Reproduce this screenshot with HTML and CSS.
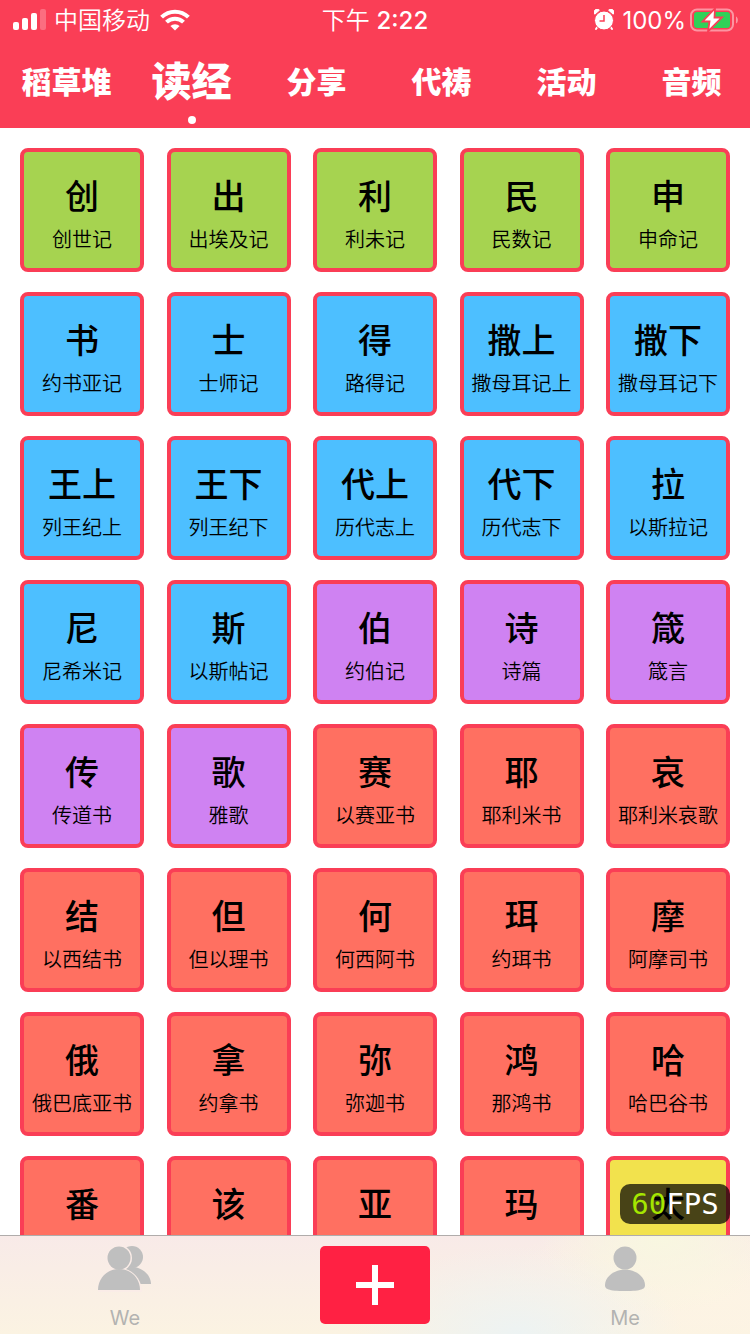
FILE: index.html
```html
<!DOCTYPE html>
<html lang="zh-CN">
<head>
<meta charset="utf-8">
<meta name="viewport" content="width=device-width, initial-scale=1">
<title>读经</title>
<link rel="stylesheet" href="styles.css">
</head>
<body>
<header class="header">
  <div class="status">
    <div class="status-side">
      <svg class="signal" width="34" height="22" viewBox="0 0 34 22" fill="#fff"><rect x="1" y="13" width="6" height="8" rx="2"/><rect x="10" y="9" width="6" height="12" rx="2"/><rect x="19" y="4" width="6" height="17" rx="2"/><rect x="28" y="0" width="6" height="21" rx="2" opacity=".25"/></svg>
      <span class="carrier">中国移动</span>
      <svg class="wifi" width="30" height="22" viewBox="0 0 30 22" fill="none" stroke="#fff" stroke-width="4"><path d="M1.6 8.2a19 19 0 0 1 26.8 0"/><path d="M6.5 13.2a12 12 0 0 1 17 0"/><path d="M15 21.5l-4.6-4.4a6.5 6.5 0 0 1 9.2 0z" fill="#fff" stroke="none"/></svg>
    </div>
    <div class="clock">下午 <time>2:22</time></div>
    <div class="status-side status-end">
      <svg class="alarm" width="20" height="22" viewBox="0 0 20 22"><path d="M4 17l-2 3M16 17l2 3" stroke="#fff" stroke-width="2" stroke-linecap="round"/><path d="M.8 5.2A3 3 0 0 1 5.4 1.200zM19.2 5.200A3 3 0 0 0 14.600 1.200z" fill="#fff" stroke="#fff" stroke-linejoin="round"/><circle cx="10" cy="11.500" r="9.500" fill="#fff" stroke="#fa3e56"/><path d="M10 6v6H5.500" fill="none" stroke="#fa3e56" stroke-width="1.500"/></svg>
      <span class="percent">100%</span>
      <svg class="battery" width="48" height="24" viewBox="0 0 48 24"><rect x="1" y="1.500" width="42" height="21" rx="6" fill="none" stroke="#fff" stroke-opacity=".45" stroke-width="2"/><path d="M46 8.500c2.500 1 2.500 6 0 7z" fill="#fff" fill-opacity=".45"/><rect x="4" y="4" width="36" height="16" rx="3" fill="#30d158"/><path d="M25 .5L12.500 13.500h7L18 23.500 32 9.500h-7.500z" fill="#fff" stroke="#fa3e56" stroke-width="1.800"/></svg>
    </div>
  </div>
  <nav class="tabs">
    <button class="tab">稻草堆</button>
    <button class="tab tab-active" aria-current="page">读经</button>
    <button class="tab">分享</button>
    <button class="tab">代祷</button>
    <button class="tab">活动</button>
    <button class="tab">音频</button>
  </nav>
</header>
<main class="books">
  <button class="book law"><b>创</b><span>创世记</span></button>
  <button class="book law"><b>出</b><span>出埃及记</span></button>
  <button class="book law"><b>利</b><span>利未记</span></button>
  <button class="book law"><b>民</b><span>民数记</span></button>
  <button class="book law"><b>申</b><span>申命记</span></button>
  <button class="book history"><b>书</b><span>约书亚记</span></button>
  <button class="book history"><b>士</b><span>士师记</span></button>
  <button class="book history"><b>得</b><span>路得记</span></button>
  <button class="book history"><b>撒上</b><span>撒母耳记上</span></button>
  <button class="book history"><b>撒下</b><span>撒母耳记下</span></button>
  <button class="book history"><b>王上</b><span>列王纪上</span></button>
  <button class="book history"><b>王下</b><span>列王纪下</span></button>
  <button class="book history"><b>代上</b><span>历代志上</span></button>
  <button class="book history"><b>代下</b><span>历代志下</span></button>
  <button class="book history"><b>拉</b><span>以斯拉记</span></button>
  <button class="book history"><b>尼</b><span>尼希米记</span></button>
  <button class="book history"><b>斯</b><span>以斯帖记</span></button>
  <button class="book poetry"><b>伯</b><span>约伯记</span></button>
  <button class="book poetry"><b>诗</b><span>诗篇</span></button>
  <button class="book poetry"><b>箴</b><span>箴言</span></button>
  <button class="book poetry"><b>传</b><span>传道书</span></button>
  <button class="book poetry"><b>歌</b><span>雅歌</span></button>
  <button class="book prophet"><b>赛</b><span>以赛亚书</span></button>
  <button class="book prophet"><b>耶</b><span>耶利米书</span></button>
  <button class="book prophet"><b>哀</b><span>耶利米哀歌</span></button>
  <button class="book prophet"><b>结</b><span>以西结书</span></button>
  <button class="book prophet"><b>但</b><span>但以理书</span></button>
  <button class="book prophet"><b>何</b><span>何西阿书</span></button>
  <button class="book prophet"><b>珥</b><span>约珥书</span></button>
  <button class="book prophet"><b>摩</b><span>阿摩司书</span></button>
  <button class="book prophet"><b>俄</b><span>俄巴底亚书</span></button>
  <button class="book prophet"><b>拿</b><span>约拿书</span></button>
  <button class="book prophet"><b>弥</b><span>弥迦书</span></button>
  <button class="book prophet"><b>鸿</b><span>那鸿书</span></button>
  <button class="book prophet"><b>哈</b><span>哈巴谷书</span></button>
  <button class="book prophet"><b>番</b></button>
  <button class="book prophet"><b>该</b></button>
  <button class="book prophet"><b>亚</b></button>
  <button class="book prophet"><b>玛</b></button>
  <button class="book gospel"><b>太</b></button>
</main>
<footer class="tabbar">
  <div class="fps"><span class="fps-value">60</span>FPS</div>
  <button class="bar-item">
    <svg width="54" height="46" viewBox="0 0 54 46" fill="#bfbfbf"><circle cx="34" cy="11" r="11"/><path d="M26 21c14-3 27 6 27 17H40z"/><g fill="#faece7"><path d="M-1 46C-1 32 9 22 21 22s23 10 23 24z"/><circle cx="21" cy="12" r="13"/></g><path d="M0 44C0 32 9 23 21 23s21 9 21 21z"/><circle cx="21" cy="12" r="11.500"/></svg>
    <span>We</span>
  </button>
  <button class="add" aria-label="添加">
    <svg width="38" height="40" viewBox="0 0 38 40"><path d="M19 0v40M0 20h38" stroke="#fff" stroke-width="6"/></svg>
  </button>
  <button class="bar-item">
    <svg width="42" height="46" viewBox="0 0 42 46" fill="#bfbfbf"><circle cx="21" cy="12" r="11.500"/><path d="M21 23.500C32 23.500 41 31 41 39c0 4-3 6-20 6S1 43 1 39c0-8 9-15.500 20-15.500z"/></svg>
    <span>Me</span>
  </button>
</footer>
</body>
</html>
```
FILE: styles.css
```css
* {
  box-sizing: border-box;
}

body {
  margin: 0;
  height: 100vh;
  display: flex;
  flex-direction: column;
  overflow: hidden;
  background: #fff;
  color: #000;
  font-family: "Inter", "Noto Sans CJK SC", sans-serif;
}

button {
  margin: 0;
  padding: 0;
  border: 0;
  background: none;
  color: inherit;
  font: inherit;
  cursor: pointer;
}

svg {
  display: block;
}

.header {
  flex: none;
  background: #fa3e56;
  color: #fff;
}

.status {
  display: flex;
  align-items: center;
  height: 40px;
  padding: 0 12px;
  font-size: 24px;
  line-height: 40px;
}

.status-side {
  flex: 1;
  display: flex;
  align-items: center;
}

.status-end {
  justify-content: flex-end;
}

.carrier,
.clock,
.percent {
  padding-top: 2px;
}

.carrier,
.clock {
  font-weight: 350;
}

.carrier {
  margin: 0 10px 0 8px;
}

.clock time {
  font-weight: 500;
}

.percent {
  margin: 0 4px 0 8px;
}

.tabs {
  display: grid;
  grid-template-columns: repeat(6, 125px);
  height: 88px;
  padding-left: 4px;
  overflow: hidden;
}

.tab {
  position: relative;
  padding-bottom: 4px;
  font-size: 30px;
  font-weight: 900;
  line-height: 84px;
}

.tab-active {
  font-size: 40px;
}

.tab-active::after {
  content: "";
  position: absolute;
  bottom: 4px;
  left: 50%;
  width: 8px;
  height: 8px;
  margin-left: -4px;
  border-radius: 50%;
  background: #fff;
}

.books {
  flex: 1;
  min-height: 0;
  display: grid;
  grid-template-columns: repeat(5, 124px);
  grid-auto-rows: 124px;
  justify-content: space-between;
  row-gap: 20px;
  padding: 20px 20px 0;
  overflow: hidden;
}

.book {
  display: flex;
  flex-direction: column;
  align-items: center;
  padding-top: 22px;
  border: 4px solid #fa3e56;
  border-radius: 8px;
}

.book b {
  font-size: 34px;
  font-weight: 500;
  line-height: 46px;
}

.book span {
  font-size: 20px;
  font-weight: 350;
  line-height: 40px;
  white-space: nowrap;
}

.law {
  background: #a6d350;
}

.history {
  background: #4dbfff;
}

.poetry {
  background: #cf82f2;
}

.prophet {
  background: #ff7061;
}

.gospel {
  background: #f2e24d;
}

.tabbar {
  position: relative;
  flex: none;
  display: grid;
  grid-template-columns: 1fr 1fr 1fr;
  justify-items: center;
  align-items: start;
  height: 99px;
  padding-top: 10px;
  border-top: 1px solid #b0acab;
  background:
    radial-gradient(ellipse 22% 90% at 69% 100%, #edf3f3 0%, #edf3f300 100%),
    radial-gradient(ellipse 16% 80% at 88% 0%, #f8f7e0 0%, #f8f7e000 100%),
    radial-gradient(ellipse 30% 90% at 95% 60%, #fdf4e4 0%, #fdf4e400 100%),
    linear-gradient(180deg, #f8eae8 0%, #fbf3e2 100%);
}

.bar-item {
  display: flex;
  flex-direction: column;
  align-items: center;
  gap: 12px;
  color: #b3b3b1;
  font-size: 20px;
  line-height: 28px;
}

.add {
  display: grid;
  place-items: center;
  width: 110px;
  height: 78px;
  border-radius: 5px;
  background: #ff2143;
}

.fps {
  position: absolute;
  right: 20px;
  bottom: 110px;
  width: 110px;
  height: 40px;
  border-radius: 10px;
  background: rgba(0, 0, 0, 0.7);
  color: #fff;
  font-family: "DejaVu Sans Mono", monospace;
  font-size: 29px;
  line-height: 40px;
  text-align: center;
}

.fps-value {
  color: #a5e600;
}
```
